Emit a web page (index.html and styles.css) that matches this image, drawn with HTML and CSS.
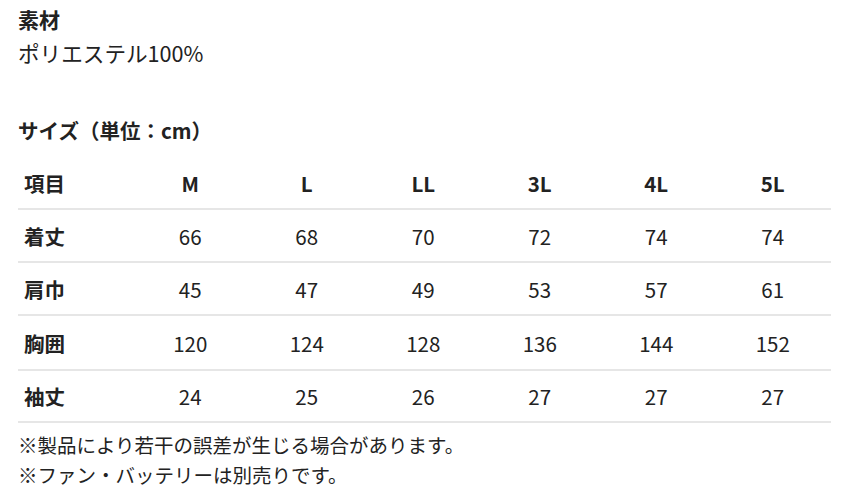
FILE: index.html
```html
<!DOCTYPE html>
<html lang="ja">
<head>
<meta charset="utf-8">
<link rel="stylesheet" href="styles.css">
</head>
<body>
<div class="page">
  <h3 class="title">素材</h3>
  <p class="material">ポリエステル100%</p>
  <h3 class="size-title">サイズ（単位：cm）</h3>
  <table class="size-table">
    <colgroup>
      <col class="col-label">
      <col><col><col><col><col><col>
    </colgroup>
    <thead>
      <tr><th class="label">項目</th><th>M</th><th>L</th><th>LL</th><th>3L</th><th>4L</th><th>5L</th></tr>
    </thead>
    <tbody>
      <tr><th class="label">着丈</th><td>66</td><td>68</td><td>70</td><td>72</td><td>74</td><td>74</td></tr>
      <tr><th class="label">肩巾</th><td>45</td><td>47</td><td>49</td><td>53</td><td>57</td><td>61</td></tr>
      <tr><th class="label">胸囲</th><td>120</td><td>124</td><td>128</td><td>136</td><td>144</td><td>152</td></tr>
      <tr><th class="label">袖丈</th><td>24</td><td>25</td><td>26</td><td>27</td><td>27</td><td>27</td></tr>
    </tbody>
  </table>
  <p class="note">※製品により若干の誤差が生じる場合があります。</p>
  <p class="note">※ファン・バッテリーは別売りです。</p>
</div>
</body>
</html>
```

FILE: styles.css
```css
html, body {
  margin: 0;
  padding: 0;
  background: #ffffff;
}
body {
  font-family: "Noto Sans CJK JP", "Noto Sans", sans-serif;
  color: #222222;
}
.page {
  padding: 4px 0 0 18px;
}
.title {
  margin: 0;
  font-size: 21px;
  font-weight: 700;
  line-height: 30px;
}
.material {
  margin: 4px 0 0;
  font-size: 21.6px;
  line-height: 30px;
}
.size-title {
  margin: 47px 0 0;
  font-size: 20.5px;
  font-weight: 700;
  line-height: 30px;
}
.size-table {
  margin-top: 12px;
  width: 813px;
  table-layout: fixed;
  border-collapse: collapse;
  font-size: 20.5px;
}
.col-label {
  width: 114px;
}
.size-table th,
.size-table td {
  height: 51px;
  padding: 0;
  text-align: center;
  vertical-align: middle;
  line-height: 30px;
}
.size-table th {
  font-weight: 700;
}
.size-table td {
  font-weight: 400;
}
.size-table th.label {
  text-align: left;
  padding-left: 6px;
}
.size-table tbody tr,
.size-table thead tr {
  border-bottom: 2px solid #e6e6e6;
}
.size-table tbody tr:nth-child(3) th,
.size-table tbody tr:nth-child(3) td {
  height: 53px;
}
.size-table tbody tr:last-child th,
.size-table tbody tr:last-child td {
  height: 50px;
}
.note {
  margin: 0;
  font-size: 19.5px;
  line-height: 30px;
}
.size-table + .note {
  margin-top: 7px;
}
```
